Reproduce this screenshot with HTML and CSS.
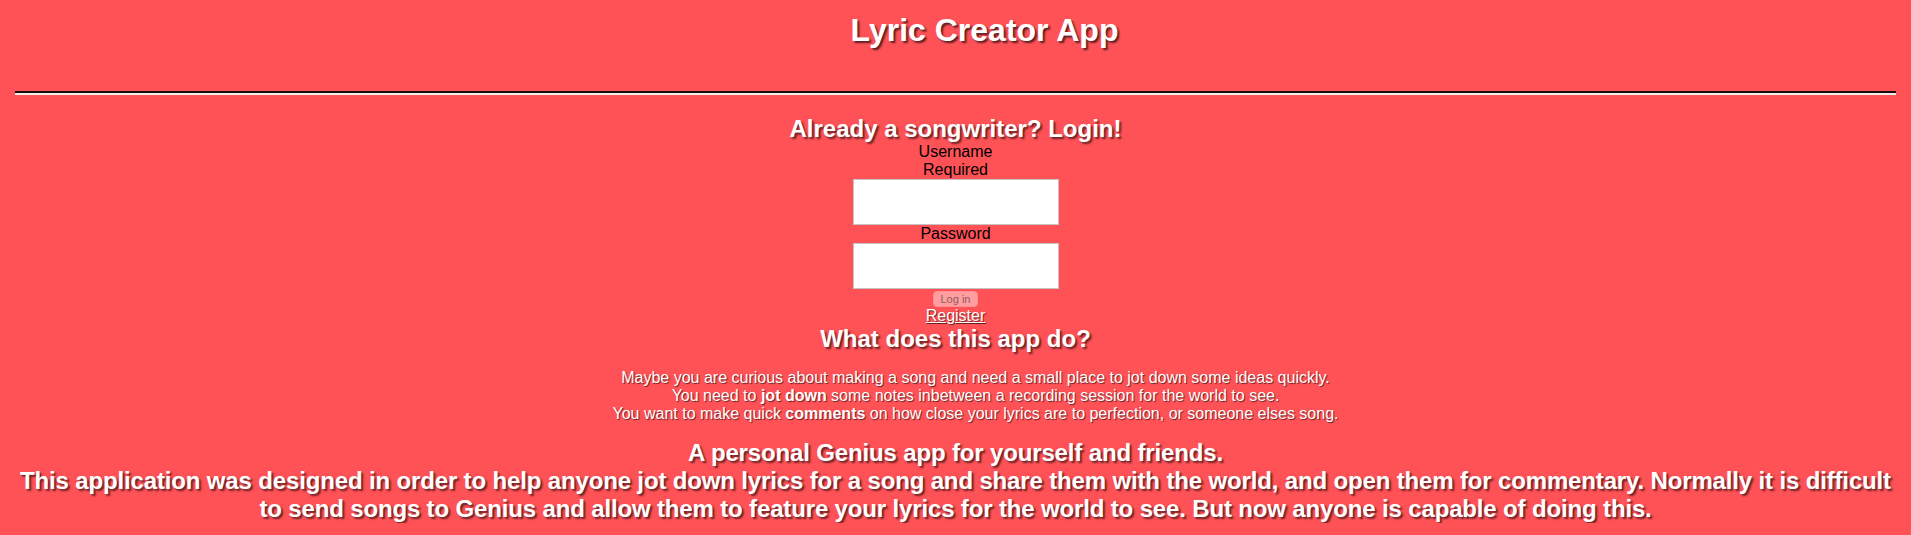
FILE: index.html
```html
<!DOCTYPE html>
<html lang="en">
<head>
<meta charset="utf-8">
<title>Lyric Creator App</title>
<link rel="stylesheet" href="styles.css">
</head>
<body>
<header class="top">
  <h1 class="title">Lyric Creator App</h1>
</header>
<hr class="rule">
<main class="main">
  <section class="login">
    <h2 class="heading">Already a songwriter? Login!</h2>
    <form class="form" onsubmit="return false">
      <label class="label" for="username">Username</label>
      <span class="hint">Required</span>
      <input class="field" id="username" type="text">
      <label class="label" for="password">Password</label>
      <input class="field" id="password" type="password">
      <button class="btn" type="submit" disabled>Log in</button>
    </form>
    <a class="register" href="#">Register</a>
  </section>
  <section class="about">
    <h2 class="heading">What does this app do?</h2>
    <p class="blurb">Maybe you are curious about making a song and need a small place to jot down some ideas quickly.<br>You need to <b>jot down</b> some notes inbetween a recording session for the world to see.<br>You want to make quick <b>comments</b> on how close your lyrics are to perfection, or someone elses song.</p>
    <h2 class="heading pitch">A personal Genius app for yourself and friends.<br>This application was designed in order to help anyone jot down lyrics for a song and share them with the world, and open them for commentary. Normally it is difficult to send songs to Genius and allow them to feature your lyrics for the world to see. But now anyone is capable of doing this.</h2>
  </section>
</main>
</body>
</html>
```
FILE: styles.css
```css
html, body {
  background: #ff5257;
}
body {
  margin: 0 8px;
  font-family: "Liberation Sans", Arial, Helvetica, sans-serif;
  font-size: 16px;
  color: #000;
  text-align: center;
}
.top {
  padding-top: 12px;
}
.title {
  margin: 0;
  padding-left: 58px;
  font-size: 32px;
  font-weight: bold;
  color: #fff;
  text-shadow: 2px 2px 2px rgba(0, 0, 0, 0.65);
}
.rule {
  margin: 42px 7px 0;
  height: 0;
  border: 0;
  border-top: 2px solid #1c0a0a;
  border-bottom: 2px solid #f2eeee;
}
.main {
  padding-top: 20px;
}
.heading {
  margin: 0;
  font-size: 24px;
  font-weight: bold;
  color: #fff;
  text-shadow: 2px 2px 2px rgba(0, 0, 0, 0.6);
}
.form {
  display: flex;
  flex-direction: column;
  align-items: center;
}
.label, .hint {
  display: block;
}
.field {
  box-sizing: border-box;
  width: 206px;
  height: 46px;
  margin: 0;
  border: 1px solid #c4c4c4;
  background: #fff;
}
.btn {
  margin-top: 2px;
  height: 16px;
  padding: 0 7px;
  font-family: "Liberation Sans", Arial, sans-serif;
  font-size: 11px;
  line-height: 14px;
  color: #8e5c5e;
  background: #ff9da0;
  border: 1px solid #ff8f93;
  border-radius: 4px;
}
.register {
  display: inline-block;
  color: #fff;
  text-decoration: underline;
  text-shadow: 1px 1px 1px rgba(0, 0, 0, 0.6);
}
.blurb {
  margin: 16px 0;
  padding-left: 40px;
  color: #fff;
  text-shadow: 1px 1px 1px rgba(0, 0, 0, 0.6);
}
.pitch {
  letter-spacing: -0.15px;
}
```
